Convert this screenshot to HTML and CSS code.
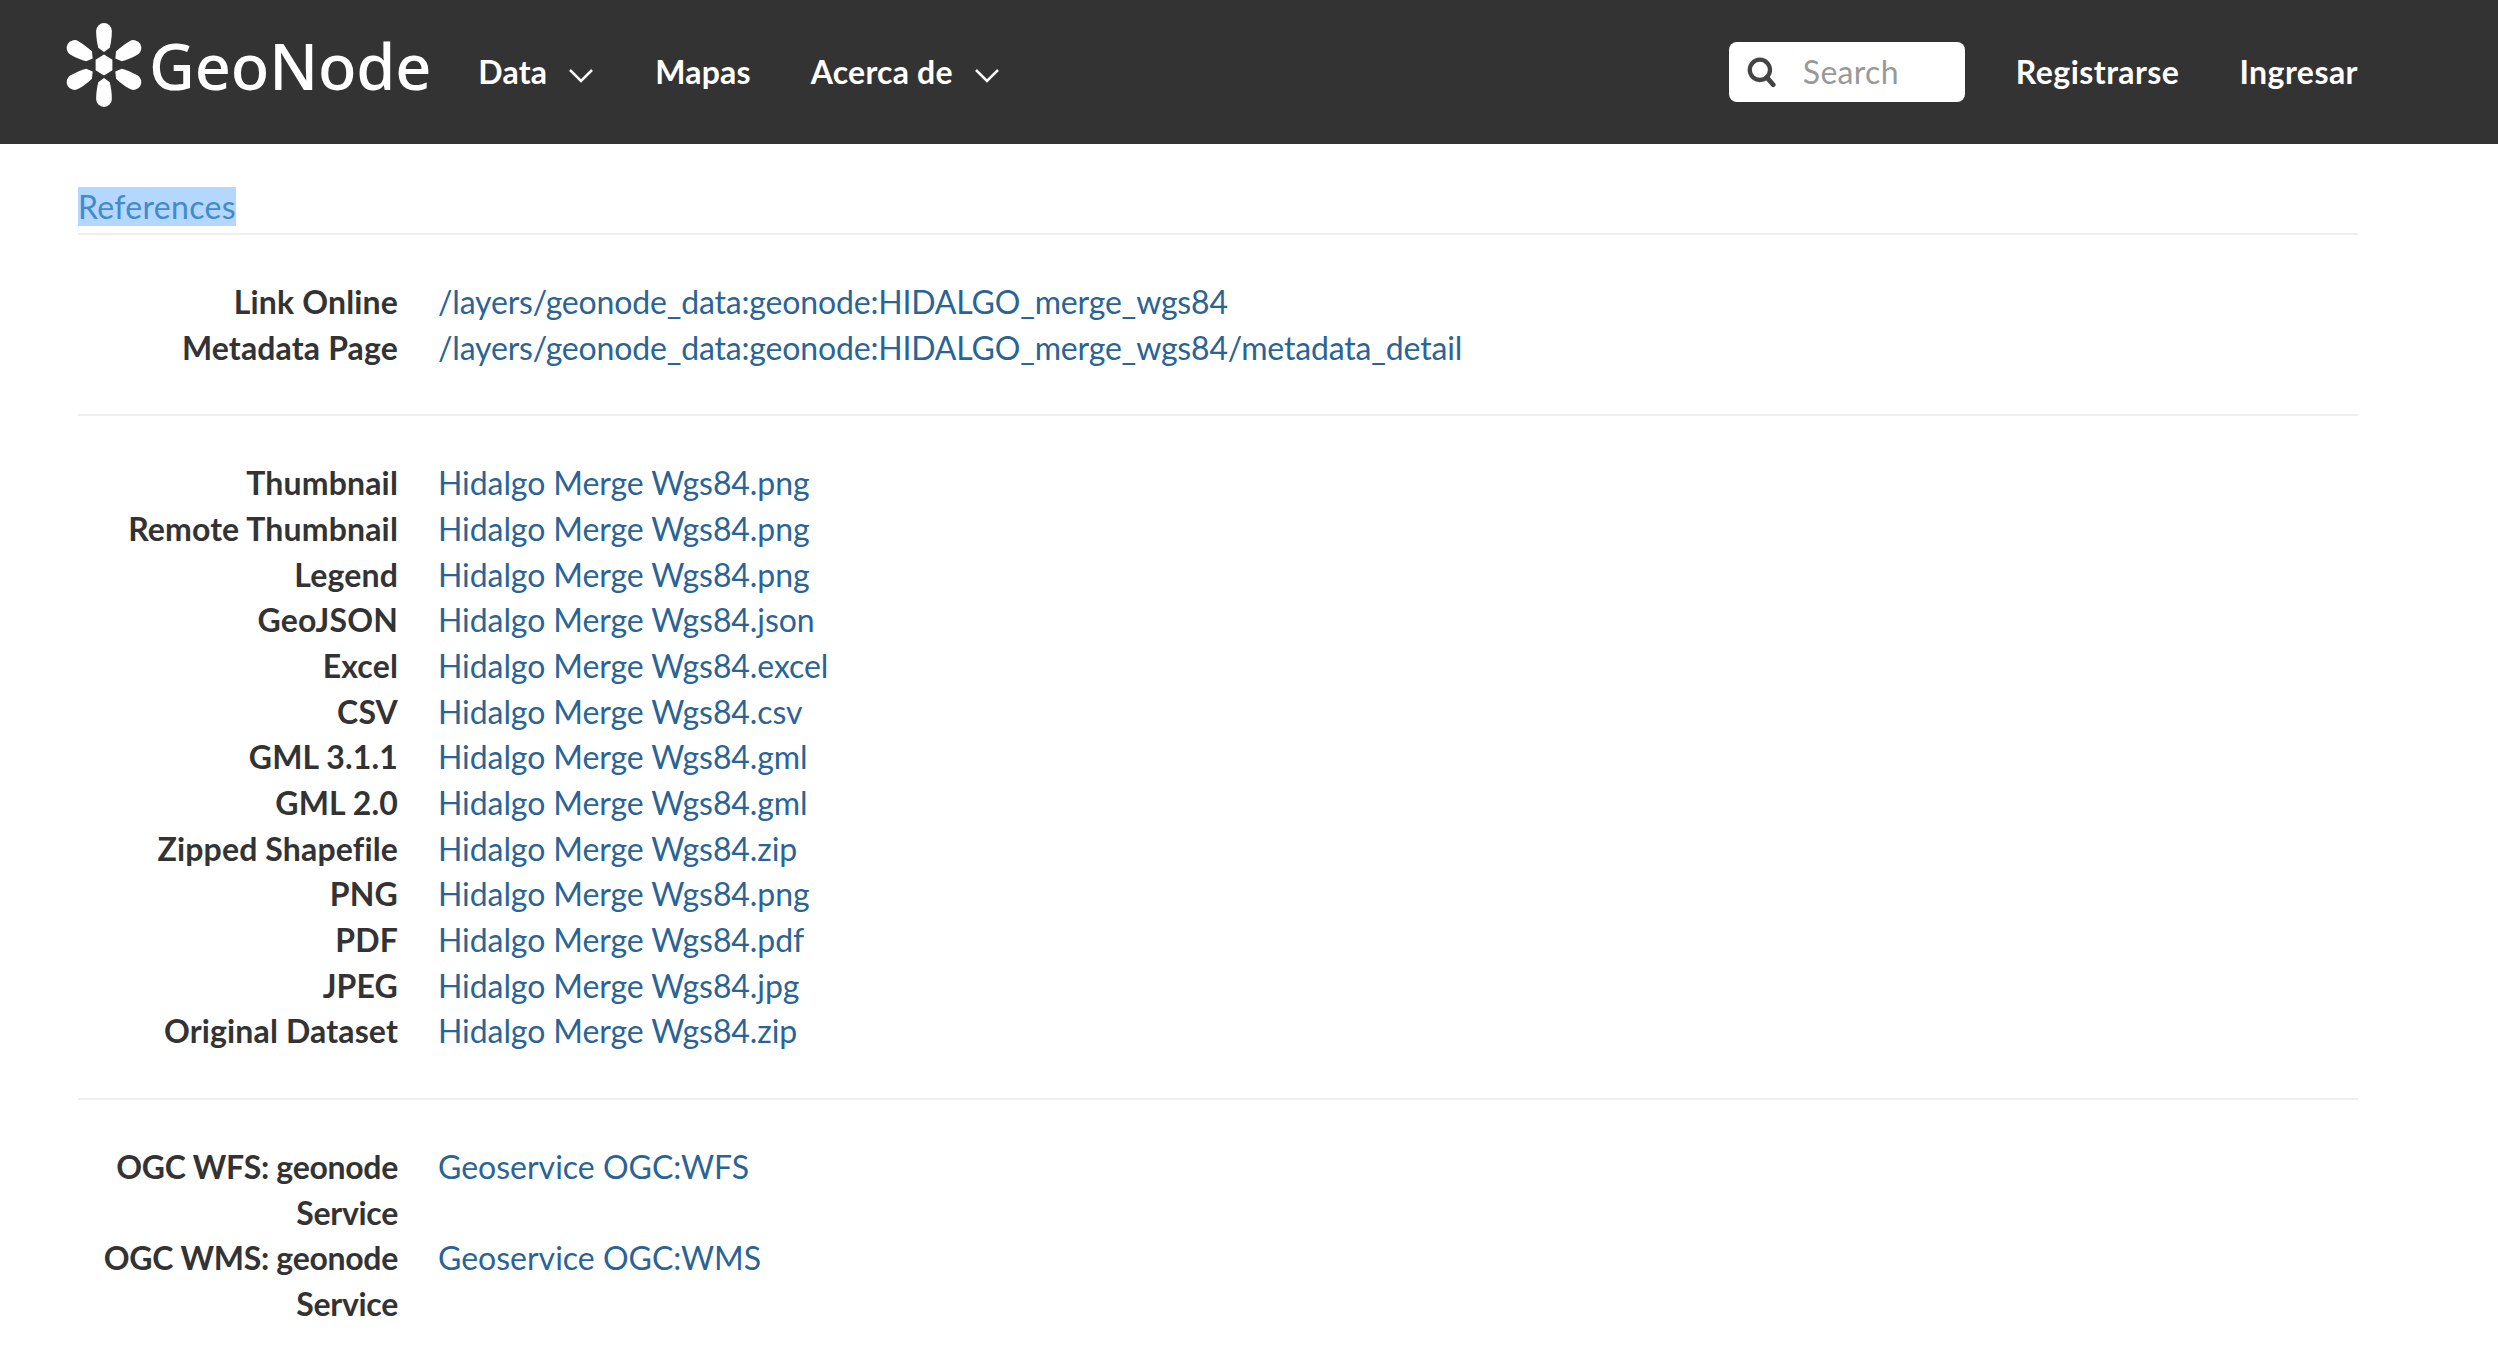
FILE: index.html
```html
<!DOCTYPE html>
<html>
<head lang="es">
<meta charset="UTF-8">
<title>GeoNode</title>
<link rel="stylesheet" href="styles.css">
</head>
<body>
<header class="topbar">
    <a class="brand" href="#">
        <svg class="brand-mark" width="84" height="88" viewBox="0 0 80 84">
            <g fill="#fff">
                <polygon points="40,32 48,37 48,47 40,52 32,47 32,37"/>
                <path d="M32.500 9.500a7.500 7.500 0 0 1 15 0c0 6-1 12-2 16l-5.500 4-5.500-4c-1-4-2-10-2-16z"/>
                <path d="M32.500 74.500a7.500 7.500 0 0 0 15 0c0-6-1-12-2-16l-5.500-4-5.500 4c-1 4-2 10-2 16z"/>
                <path d="M32.500 9.500a7.500 7.500 0 0 1 15 0c0 6-1 12-2 16l-5.500 4-5.500-4c-1-4-2-10-2-16z" transform="rotate(60 40 42)"/>
                <path d="M32.500 9.500a7.500 7.500 0 0 1 15 0c0 6-1 12-2 16l-5.500 4-5.500-4c-1-4-2-10-2-16z" transform="rotate(120 40 42)"/>
                <path d="M32.500 9.500a7.500 7.500 0 0 1 15 0c0 6-1 12-2 16l-5.500 4-5.500-4c-1-4-2-10-2-16z" transform="rotate(240 40 42)"/>
                <path d="M32.500 9.500a7.500 7.500 0 0 1 15 0c0 6-1 12-2 16l-5.500 4-5.500-4c-1-4-2-10-2-16z" transform="rotate(300 40 42)"/>
            </g>
        </svg>
        <span class="brand-name">GeoNode</span>
    </a>
    <nav class="menu">
        <a href="#">Data
            <svg class="caret" width="24" height="14" viewBox="0 0 24 14"><path d="M1 1l11 11L23 1" fill="none" stroke="#fff" stroke-width="2.500"/></svg>
        </a>
        <a href="#">Mapas</a>
        <a href="#">Acerca de
            <svg class="caret" width="24" height="14" viewBox="0 0 24 14"><path d="M1 1l11 11L23 1" fill="none" stroke="#fff" stroke-width="2.500"/></svg>
        </a>
    </nav>
    <div class="search">
        <svg width="32" height="32" viewBox="0 0 30 30"><circle cx="13" cy="13" r="9.500" fill="none" stroke="#444" stroke-width="4"/><path d="M19.500 20l6 7" stroke="#444" stroke-width="4.500" stroke-linecap="round"/></svg>
        <span class="search-text">Search</span>
    </div>
    <nav class="account">
        <a href="#">Registrarse</a>
        <a href="#">Ingresar</a>
    </nav>
</header>

<main class="con">
    <a class="picked" href="#">References</a>
    <hr>

    <dl class="links paths">
        <dt>Link Online</dt><dd><a href="#">/layers/geonode_data:geonode:HIDALGO_merge_wgs84</a></dd>
        <dt>Metadata Page</dt><dd><a href="#">/layers/geonode_data:geonode:HIDALGO_merge_wgs84/metadata_detail</a></dd>
    </dl>
    <hr>

    <dl class="links">
        <dt>Thumbnail</dt><dd><a href="#">Hidalgo Merge Wgs84.png</a></dd>
        <dt>Remote Thumbnail</dt><dd><a href="#">Hidalgo Merge Wgs84.png</a></dd>
        <dt>Legend</dt><dd><a href="#">Hidalgo Merge Wgs84.png</a></dd>
        <dt>GeoJSON</dt><dd><a href="#">Hidalgo Merge Wgs84.json</a></dd>
        <dt>Excel</dt><dd><a href="#">Hidalgo Merge Wgs84.excel</a></dd>
        <dt>CSV</dt><dd><a href="#">Hidalgo Merge Wgs84.csv</a></dd>
        <dt>GML 3.1.1</dt><dd><a href="#">Hidalgo Merge Wgs84.gml</a></dd>
        <dt>GML 2.0</dt><dd><a href="#">Hidalgo Merge Wgs84.gml</a></dd>
        <dt>Zipped Shapefile</dt><dd><a href="#">Hidalgo Merge Wgs84.zip</a></dd>
        <dt>PNG</dt><dd><a href="#">Hidalgo Merge Wgs84.png</a></dd>
        <dt>PDF</dt><dd><a href="#">Hidalgo Merge Wgs84.pdf</a></dd>
        <dt>JPEG</dt><dd><a href="#">Hidalgo Merge Wgs84.jpg</a></dd>
        <dt>Original Dataset</dt><dd><a href="#">Hidalgo Merge Wgs84.zip</a></dd>
    </dl>
    <hr>

    <dl class="links services">
        <dt>OGC WFS: geonode Service</dt><dd><a href="#">Geoservice OGC:WFS</a></dd>
        <dt>OGC WMS: geonode Service</dt><dd><a href="#">Geoservice OGC:WMS</a></dd>
    </dl>
</main>
</body>
</html>
```

FILE: styles.css
```css
*{margin:0;padding:0;box-sizing:border-box;}
html,body{height:100%;}
body{
	background:#fff;
	color:#333;
	font:32px/45.65px Lato,"Open Sans",sans-serif;
	overflow:hidden;
}
a{
	text-decoration:none;
	color:#2a6496;
}

.topbar{
	height:144px;
	background:#333;
	display:flex;
	align-items:center;
	padding:0 140px 0 62px;
}
.topbar a{color:#fff;font-weight:700;}
.brand{display:flex;align-items:center;}
.brand-mark{margin-bottom:14px;}
.brand-name{
	font:500 63px/80px "Noto Sans",sans-serif;
	letter-spacing:-0.1px;
	margin-left:3px;
	margin-bottom:12px;
}
.menu{display:flex;gap:60px;margin-left:47px;letter-spacing:0.2px;}
.caret{margin:0 2px 1px 14px;}
.search{
	width:236px;
	height:60px;
	margin-left:auto;
	background:#fff;
	border-radius:8px;
	display:flex;
	align-items:center;
	padding-left:17px;
	color:#999;
	letter-spacing:0.3px;
}
.search-text{margin-left:25px;}
.account{display:flex;gap:60px;margin-left:51px;letter-spacing:0.45px;}

.con{padding:43px 140px 0 78px;}
.picked{
	display:block;
	width:158px;
	height:39px;
	line-height:39px;
	background:#b3d7ff;
	color:#428bca;
	letter-spacing:0.3px;
}
hr{
	border:0;
	height:2px;
	background:#eee;
}
.picked + hr{margin-top:7px;}
.links{
	display:grid;
	grid-template-columns:320px 1fr;
	column-gap:40px;
	padding:44px 0;
}
.links dt{font-weight:700;text-align:right;letter-spacing:0.15px;}
.links dd{letter-spacing:-0.08px;}
.paths dd{letter-spacing:-0.17px;}
.services dt{letter-spacing:-0.3px;}
.services dd{letter-spacing:0;}
```
